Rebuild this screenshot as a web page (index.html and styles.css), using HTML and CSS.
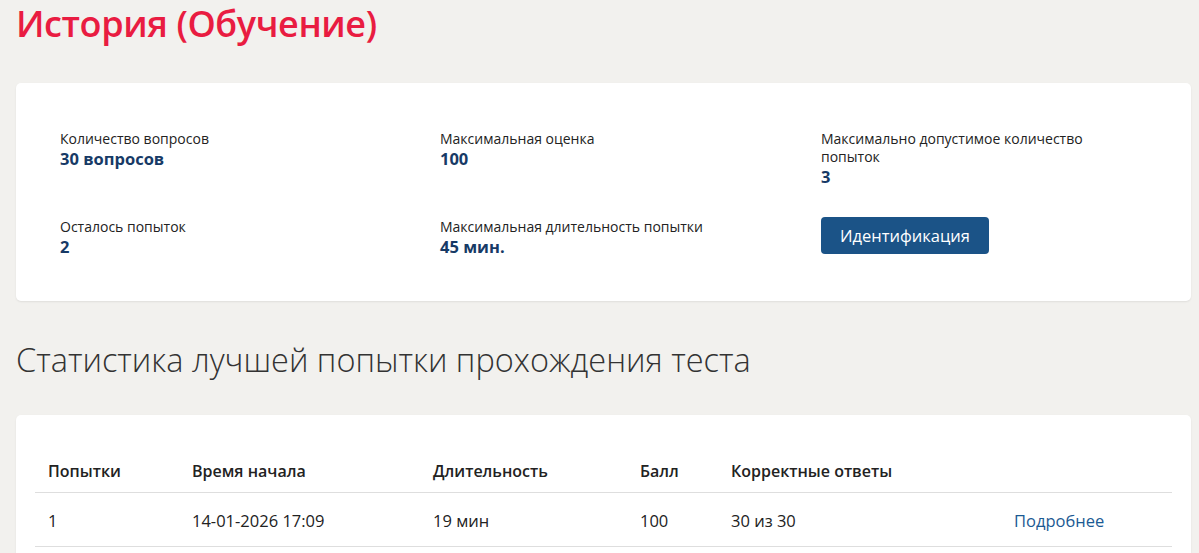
FILE: index.html
```html
<!DOCTYPE html>
<html lang="ru">
<head>
<meta charset="utf-8">
<link rel="stylesheet" href="styles.css">
</head>
<body>
<div class="page">
  <h1 class="title">История (Обучение)</h1>

  <section class="card info-card">
    <div class="info-grid">
      <div class="info-item">
        <div class="info-label">Количество вопросов</div>
        <div class="info-value">30 вопросов</div>
      </div>
      <div class="info-item">
        <div class="info-label">Максимальная оценка</div>
        <div class="info-value">100</div>
      </div>
      <div class="info-item narrow">
        <div class="info-label">Максимально допустимое количество попыток</div>
        <div class="info-value">3</div>
      </div>
      <div class="info-item">
        <div class="info-label">Осталось попыток</div>
        <div class="info-value">2</div>
      </div>
      <div class="info-item">
        <div class="info-label">Максимальная длительность попытки</div>
        <div class="info-value">45 мин.</div>
      </div>
      <div class="info-item">
        <button class="btn-primary" type="button">Идентификация</button>
      </div>
    </div>
  </section>

  <h2 class="subtitle">Статистика лучшей попытки прохождения теста</h2>

  <section class="card table-card">
    <table class="stats">
      <thead>
        <tr>
          <th class="c1">Попытки</th>
          <th class="c2">Время начала</th>
          <th class="c3">Длительность</th>
          <th class="c4">Балл</th>
          <th class="c5">Корректные ответы</th>
          <th class="c6"></th>
        </tr>
      </thead>
      <tbody>
        <tr>
          <td>1</td>
          <td>14-01-2026 17:09</td>
          <td>19 мин</td>
          <td>100</td>
          <td>30 из 30</td>
          <td><a class="more" href="#">Подробнее</a></td>
        </tr>
      </tbody>
    </table>
  </section>
</div>
</body>
</html>
```

FILE: styles.css
```css
html, body {
  margin: 0;
  padding: 0;
}

body {
  background: #f2f1ee;
  font-family: "Open Sans", "Noto Sans", sans-serif;
  color: #222;
}

.page {
  padding: 0 8px 0 16px;
}

.title {
  margin: 0;
  padding-top: 2px;
  font-family: "Open Sans", sans-serif;
  font-weight: 600;
  font-size: 36px;
  line-height: 44px;
  color: #e91c41;
  letter-spacing: -0.4px;
}

.card {
  background: #fff;
  border-radius: 5px;
  box-shadow: 0 1px 2px rgba(0, 0, 0, 0.08);
}

.info-card {
  margin-top: 37px;
  height: 218px;
  box-sizing: border-box;
  padding: 47px 20px 0 44px;
}

.info-grid {
  display: grid;
  grid-template-columns: 380px 381px 1fr;
  row-gap: 31px;
}

.info-item.narrow {
  max-width: 290px;
}

.info-label {
  font-size: 14px;
  line-height: 18px;
  color: #222;
}

.info-value {
  font-size: 16.5px;
  line-height: 21px;
  font-weight: 700;
  color: #173a66;
}

.btn-primary {
  display: block;
  width: 168px;
  height: 37px;
  margin-top: -1px;
  background: #1b5387;
  color: #fff;
  border: none;
  border-radius: 4px;
  font-family: "Open Sans", sans-serif;
  font-size: 16.5px;
  cursor: pointer;
}

.subtitle {
  margin: 0;
  padding-top: 39px;
  font-family: "Open Sans", sans-serif;
  font-weight: 300;
  font-size: 32.5px;
  line-height: 40px;
  color: #333;
}

.table-card {
  margin-top: 35px;
  padding: 35px 19px 20px 19px;
}

.stats {
  width: 100%;
  table-layout: fixed;
  border-collapse: collapse;
}

.stats th {
  text-align: left;
  font-size: 16px;
  font-weight: 600;
  color: #222;
  padding: 0 13px;
  height: 42px;
  box-sizing: border-box;
  vertical-align: middle;
  border-bottom: 1px solid #dedede;
}

.stats td {
  padding: 2px 13px 0 13px;
  height: 54px;
  box-sizing: border-box;
  font-size: 16.5px;
  color: #222;
  border-bottom: 1px solid #dedede;
}

.c1 { width: 144px; }
.c2 { width: 241px; }
.c3 { width: 207px; }
.c4 { width: 91px; }
.c5 { width: 283px; }

.more {
  color: #1b5a93;
  text-decoration: none;
}
```
